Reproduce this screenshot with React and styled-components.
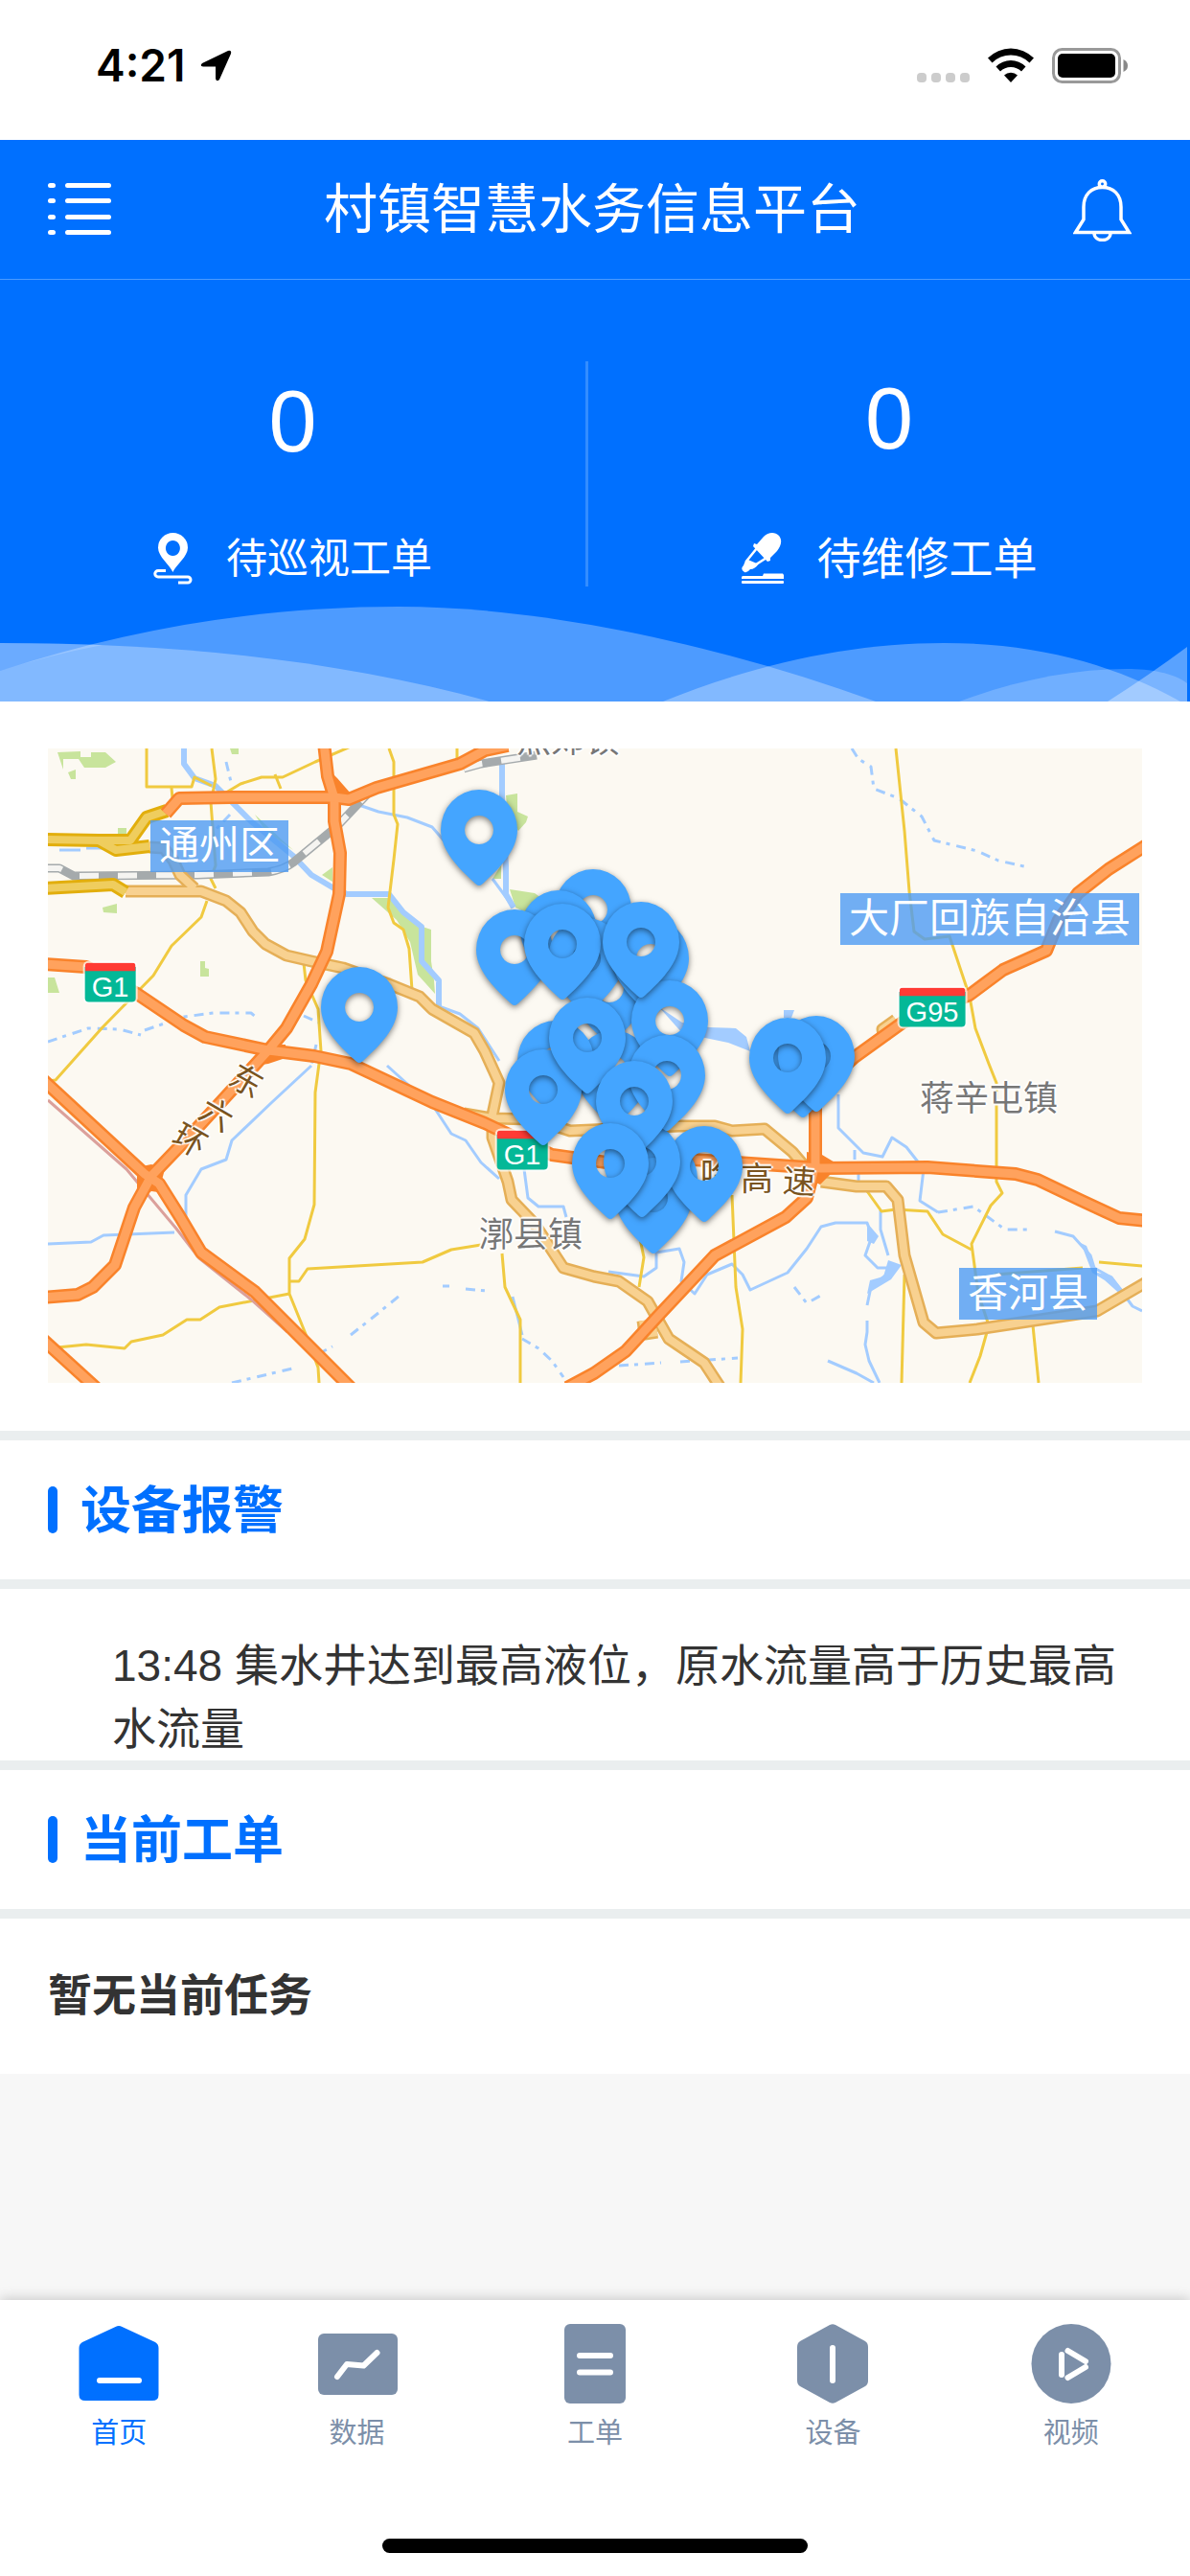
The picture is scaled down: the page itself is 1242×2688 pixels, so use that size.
import React from "react";
import styled, { createGlobalStyle } from "styled-components";

const BLUE = "#0070ff";
const SLATE = "#7c8fa9";

const GlobalStyle = createGlobalStyle`
  *, *::before, *::after { box-sizing: border-box; }
  body {
    margin: 0;
    background: #f7f7f7;
    color: #333;
    font-family: "Liberation Sans", "Noto Sans CJK SC", sans-serif;
  }
  h1, h2, p { margin: 0; }
  button {
    border: 0;
    padding: 0;
    background: none;
    color: inherit;
    font: inherit;
    cursor: pointer;
  }
  svg { display: block; flex: none; }
`;

const Page = styled.div`
  display: flex;
  flex-direction: column;
  min-height: 100vh;
`;

const StatusBar = styled.div`
  display: flex;
  align-items: center;
  justify-content: space-between;
  height: 146px;
  padding: 0 65px 10px 100px;
  background: #fff;
  color: #000;
`;

const StatusGroup = styled.div`
  display: flex;
  align-items: center;
  gap: ${(p) => p.$gap}px;
`;

const Clock = styled.span`
  font-family: Inter, "Liberation Sans", sans-serif;
  font-size: 46px;
  font-weight: 600;
  line-height: 56px;
`;

const TitleBar = styled.header`
  display: flex;
  align-items: center;
  justify-content: space-between;
  height: 146px;
  padding: 1px 61px 0 50px;
  border-bottom: 1px solid #4c9bff;
  background: ${BLUE};
  color: #fff;
`;

const Title = styled.h1`
  font-size: 56px;
  font-weight: 400;
  line-height: 80px;
`;

const Hero = styled.section`
  padding-top: 85px;
  background: ${BLUE};
  color: #fff;
`;

const Stats = styled.div`
  display: grid;
  grid-template-columns: calc(50% - 10px) 3px 1fr;
  align-items: center;
  height: 250px;
  margin-bottom: 5px;
`;

const StatDivider = styled.div`
  align-self: start;
  height: 235px;
  background: #338dff;
`;

const Stat = styled.div`
  display: flex;
  flex-direction: column;
  align-items: center;
  gap: 62px;
`;

const StatValue = styled.span`
  font-size: 90px;
  line-height: 100px;
`;

const StatLabel = styled.span`
  display: flex;
  align-items: center;
  gap: 35px;
  font-size: ${(p) => (p.$large ? 46 : 43)}px;
  line-height: ${(p) => (p.$large ? 68 : 62)}px;
`;

const Waves = styled.svg`
  width: 100%;
  height: 100px;
`;

const MapPanel = styled.section`
  padding: 49px 50px 50px;
  background: #fff;
`;

const MapCanvas = styled.div`
  position: relative;
  aspect-ratio: 1142 / 662;
  overflow: hidden;
  background: #fcf9f2;
`;

const MapDrawing = styled.svg`
  width: 100%;
  height: 100%;
`;

const OnMap = styled.div`
  position: absolute;
  left: ${(p) => ((p.$x - 50) / 1142) * 100}%;
  top: ${(p) => ((p.$y - 781) / 662) * 100}%;
  transform: translate(-50%, -50%) rotate(${(p) => p.$turn || 0}deg);
  white-space: nowrap;
`;

const District = styled(OnMap)`
  padding: 0 9px;
  background: rgba(78, 155, 243, 0.8);
  color: #fff;
  font-size: 42px;
  line-height: 54px;
`;

const Place = styled(OnMap)`
  color: ${(p) => (p.$road ? "#7a5420" : "#777")};
  font-size: ${(p) => (p.$road ? 34 : 36)}px;
  line-height: 40px;
  text-shadow: 2px 0 1px #fff, -2px 0 1px #fff, 0 2px 1px #fff, 0 -2px 1px #fff;
`;

const Shield = styled(OnMap)`
  padding: 0 7px;
  border-top: 9px solid #ff3b35;
  border-radius: 4px;
  background: #04b897;
  box-shadow: 0 0 0 2px rgba(255, 255, 255, 0.7);
  color: #fff;
  font-size: 29px;
  line-height: 32px;
`;

const Pin = styled.button`
  position: absolute;
  left: ${(p) => ((p.$x - 50) / 1142) * 100}%;
  top: ${(p) => ((p.$y - 781) / 662) * 100}%;
  transform: translate(-50%, -100%);
  filter: drop-shadow(0 2px 3px rgba(0, 0, 0, 0.5));
`;

const SectionHead = styled.div`
  display: flex;
  align-items: center;
  gap: 24px;
  height: 165px;
  padding: 0 50px;
  border-top: 10px solid #eaeeef;
  border-bottom: 10px solid #eaeeef;
  background: #fff;
`;

const Marker = styled.span`
  width: 10px;
  height: 49px;
  border-radius: 5px;
  background: ${BLUE};
`;

const SectionTitle = styled.h2`
  padding-top: 2px;
  color: ${BLUE};
  font-size: 53px;
  font-weight: 600;
  line-height: 76px;
`;

const Alarm = styled.p`
  padding: 47px 50px 0 117px;
  background: #fff;
  font-size: 46px;
  line-height: 66px;
`;

const Empty = styled.p`
  padding: 47px 50px 49px;
  background: #fff;
  font-size: 46px;
  font-weight: 600;
  line-height: 66px;
`;

const Filler = styled.div`
  flex: 1;
`;

const TabBar = styled.nav`
  display: flex;
  flex-direction: column;
  padding-bottom: 24px;
  background: #fff;
  box-shadow: 0 -2px 12px rgba(0, 0, 0, 0.18);
`;

const Tabs = styled.div`
  display: grid;
  grid-template-columns: repeat(5, 1fr);
  padding: 25px 0 90px;
`;

const Tab = styled.button`
  display: flex;
  flex-direction: column;
  align-items: center;
  gap: 10px;
  color: ${(p) => (p.$active ? BLUE : SLATE)};
  font-size: 29px;
  line-height: 40px;
`;

const HomeIndicator = styled.div`
  align-self: center;
  width: 444px;
  max-width: 60%;
  height: 15px;
  border-radius: 8px;
  background: #000;
`;

const LocationArrow = () => (
  <svg width="33" height="33" viewBox="0 0 33 33">
    <path d="M2 14 L29 1 Q33 0 32 4 L20 31 Q17 34 16 30 V17.500 H3 Q-1 17 2 14Z" fill="#000" />
  </svg>
);

const SignalDots = () => (
  <svg width="55" height="37" viewBox="0 0 55 37" fill="#ccc">
    {[0, 15, 30, 45].map((x) => (
      <rect key={x} x={x} y="26" width="10" height="10" rx="4" />
    ))}
  </svg>
);

const Wifi = () => (
  <svg width="48" height="37" viewBox="0 0 48 37" fill="#000">
    <path d="M0 10.500 A34 34 0 0 1 48 10.500 L43.500 15.500 A27.500 27.500 0 0 0 4.500 15.500Z" />
    <path d="M8.500 19.500 A22 22 0 0 1 39.500 19.500 L35 24.500 A15.500 15.500 0 0 0 13 24.500Z" />
    <path d="M17 28.500 A10 10 0 0 1 31 28.500 L24 36Z" />
  </svg>
);

const Battery = () => (
  <svg width="79" height="37" viewBox="0 0 79 37">
    <rect x="1.500" y="1.500" width="69" height="34" rx="9" fill="none" stroke="#999" strokeWidth="3" />
    <rect x="6" y="6" width="60" height="25" rx="5" fill="#000" />
    <path d="M74.500 12 Q79 14 79 18.500 Q79 23 74.500 25Z" fill="#888" />
  </svg>
);

const MenuIcon = () => (
  <svg width="66" height="56" viewBox="0 0 66 56" fill="#fff">
    {[0, 16, 33, 49].map((y) => (
      <g key={y}>
        <rect x="0" y={y} width="8" height="5" rx="2.500" />
        <rect x="18" y={y} width="48" height="5" rx="2.500" />
      </g>
    ))}
  </svg>
);

const BellIcon = () => (
  <svg width="61" height="65" viewBox="0 0 61 65" fill="none" stroke="#fff" strokeWidth="3.500">
    <circle cx="30.500" cy="5" r="3.200" />
    <path d="M2.500 55.500 L11 42 V29 C11 16 19 8.500 30.500 8.500 C42 8.500 50 16 50 29 V42 L58.500 55.500Z" />
    <path d="M22 56 C22 66 39 66 39 56" />
  </svg>
);

const PatrolIcon = () => (
  <svg width="41" height="54" viewBox="0 0 41 54">
    <path
      d="M20.400 41 C17 33 5 25 5 15.500 A15.500 15.500 0 0 1 36 15.500 C36 25 24 33 20.400 41Z M20.400 8 a7.500 8 0 1 0 .01 0Z"
      fill="#fff"
      fillRule="evenodd"
    />
    <path d="M13 39.500 H5 A3 3 0 0 0 5 46 H36 A3 3 0 0 1 36 52 H26" fill="none" stroke="#fff" strokeWidth="3" />
  </svg>
);

const RepairIcon = () => (
  <svg width="44" height="54" viewBox="0 0 44 54" fill="#fff">
    <path d="M13 11 L16 12 L23 4 C28 -1 35 -1 39 3 C43 8 41 14 37 19 L30 26 V29 L27 30 L12 14Z" />
    <path d="M16 16 L5.500 29 L15 33 L26 26" fill="none" stroke="#fff" strokeWidth="2.500" />
    <path d="M4 29 Q11 33 18 32 Q14 38 9 38 Q6 42 3 41 Q-2 38 2 34Z" />
    <path d="M0 46 L1 45 H22 L23 42.500 H43 L44 44 V48 H0Z" />
    <rect x="0" y="50" width="44" height="3" rx="1" />
  </svg>
);

const tabShapes = {
  home: (
    <>
      <path d="M38.500 3 Q42 1 45.500 3 L80 19 Q83.500 21 83.500 25 V74 Q83.500 80 77 80 H7 Q.5 80 .5 74 V25 Q.5 21 4 19Z" fill={BLUE} />
      <path d="M22 59 H63" />
    </>
  ),
  data: (
    <>
      <rect x="1" y="10" width="83" height="64" rx="6" fill={SLATE} />
      <path d="M21 55 L31 42 L48.500 43.500 L62.500 30" />
    </>
  ),
  order: (
    <>
      <rect x="10" y="0" width="64" height="83" rx="6" fill={SLATE} />
      <path d="M26 33 H58 M26 50.500 H58" />
    </>
  ),
  device: (
    <>
      <path d="M39 1 Q42 -.5 45 1 L76 18 Q79 20 79 24 V59 Q79 63 76 65 L45 82 Q42 83.500 39 82 L8 65 Q5 63 5 59 V24 Q5 20 8 18Z" fill={SLATE} />
      <path d="M42 25 V59" />
    </>
  ),
  video: (
    <>
      <circle cx="42" cy="41.500" r="41.500" fill={SLATE} />
      <path d="M32 32 V53 M38.500 28 L57 39 M57 45 L38.500 56" />
    </>
  ),
};

const TabIcon = ({ name }) => (
  <svg width="84" height="84" viewBox="0 0 84 84" fill="none">
    <g stroke="#fff" strokeWidth="6" strokeLinecap="round" strokeLinejoin="round">
      {React.Children.map(tabShapes[name].props.children, (shape) =>
        shape.props.fill ? React.cloneElement(shape, { stroke: "none" }) : shape
      )}
    </g>
  </svg>
);

const motorways = [
  "M338 775 L342 810 L349 833 V857 L355 890 L354 933 L341 993 L325 1027 L299 1073 L280 1096 L203 1180 L158 1227 L140 1260 L120 1320 L97 1343 L81 1351 L45 1354",
  "M173 849 L187 833 L240 832 H349 L364 834 L393 822 L480 797 L506 783 L530 778",
  "M45 1006 L90 1009 L143 1037 L192 1070 L214 1082 L280 1096 L328 1102 L366 1110 L451 1150 L506 1172 L576 1205 L640 1214 L723 1210 L857 1219 L968 1218 L1060 1225 L1083 1231 L1127 1252 L1168 1271 L1198 1274",
  "M45 1127 L151 1225 L166 1235 L188 1270 L210 1307 L266 1348 L321 1403 L366 1448",
  "M45 1398 L100 1448",
  "M1198 881 L1157 907 L1125 932 L1105 960 L1092 992 L1047 1012 L1012 1038 L942 1067 L892 1103 L851 1140 V1215 L842 1250 L820 1270 L746 1310 L687 1373 L653 1410 L620 1433 L592 1448",
];

const trunkRoads = [
  "M156 884 L171 885 L181 898 L188 913 L203 927",
  "M131 930 H210 L236 940 L251 952 L264 972 L277 985 L299 997 L325 1003 L358 1010 L406 1027 L438 1040 L451 1053 L495 1078 L506 1097 L521 1130 L514 1163 V1187 L530 1233 L534 1252 L558 1277 L588 1323 L620 1332 L646 1337 L676 1358 L698 1397 L735 1422 L752 1448",
  "M484 1162 L514 1167 L558 1168 L595 1180 L709 1175 H746 L764 1180 L798 1178 L827 1202 L838 1215",
  "M857 1233 L894 1238 H925 L937 1252 L944 1310 L964 1380 L977 1391 L1020 1387 L1145 1368 L1198 1337",
  "M935 1064 L921 1074 L923 1086",
  "M671 1378 L673 1392 L686 1390",
];

const expressways = [
  "M45 876 L103 877 L121 887 L156 883",
  "M103 877 H136 L153 853 L174 846",
  "M45 927 L118 923 L131 931",
];

const localRoads = [
  "M153 781 V821 H200 L203 811 L221 820 M179 822 L180 833",
  "M221 781 L225 813 L220 837 L225 903 L220 917 L225 927",
  "M236 827 L251 818 L273 811 H295 L329 795 L366 779 M287 808 L293 823",
  "M406 781 L411 795 V850 L415 860 L411 897 L405 947 L411 963 L421 970 L427 990 L430 1033",
  "M477 781 V797",
  "M216 940 L210 957 L179 987 L160 1018 L107 1072 L58 1127 L50 1128",
  "M317 1005 L319 1023 L332 1053 L335 1097 L333 1110 L329 1140 L328 1257 L318 1293 L302 1313 V1350 L321 1397 L332 1427 L333 1443",
  "M302 1337 H312 L321 1324 L441 1317 L471 1304 L502 1299",
  "M302 1350 L229 1364 L209 1377 H195 L170 1393 L137 1400 L130 1407 L90 1403 L50 1407",
  "M524 1308 L527 1343 L543 1377 V1443",
  "M935 781 L944 867 L949 930 L954 972 L965 980 L991 977 L1012 1040 L1018 1073 L1032 1110 L1040 1130 V1233 L1046 1245 L1034 1258 L1014 1298 L1021 1350 L1032 1383 L1023 1415 L1012 1443",
  "M905 1243 L920 1264 L935 1262 L968 1264 L984 1288 L1014 1304",
  "M764 1247 L768 1343 L775 1387 L773 1443",
  "M944 1330 L941 1443",
  "M1078 1383 L1084 1443",
  "M1147 1317 L1192 1321 M1038 1330 L1130 1323",
  "M668 1293 L672 1312 L667 1343",
];

const rivers = [
  "M192 781 V797 L203 812 L225 820 L242 837 L262 857 L306 893 L325 913 L347 926 L362 933 H406 L421 952 L440 967 V1003 L458 1023 V1050",
  "M524 797 V840 L528 903 V933 L536 947",
];

const streams = [
  "M458 1050 L480 1058 L499 1073 L521 1107",
  "M366 837 L395 847 L425 853 L451 863 L470 885 M514 917 L536 947",
  "M62 887 H84 M90 885 H108",
  "M325 1112 L284 1150 L242 1190 L236 1210 L210 1220 L194 1247 V1277",
  "M50 1298 L95 1296 L108 1289 L182 1286",
  "M404 1112 L454 1157 L471 1183 L486 1190 L502 1213 L521 1230",
  "M547 1220 L551 1250 L562 1259 H588 L591 1270",
  "M875 1142 V1177 L901 1203 L921 1207 L931 1187 L946 1197 L964 1220 L960 1253 L979 1265",
  "M1101 1285 L1120 1290 L1138 1310 L1142 1323 L1160 1333 L1182 1363 L1192 1368",
  "M635 1327 L672 1332 L685 1323 V1307 L709 1303 L714 1317 L711 1337 L725 1350 L738 1330 L764 1319 L775 1330 L783 1346 L822 1328 L842 1303 L857 1280 L872 1276 H905 L910 1290 L903 1310 L916 1323 H934 L909 1343 L905 1362",
  "M919 1263 V1283 L927 1310 M896 1217 V1232 M892 1200 V1210",
  "M905 1378 V1390 L903 1403 L907 1420 L918 1443 M864 1420 L894 1433 L912 1443",
  "M535 1353 L545 1393",
];

const brooks = [
  "M236 795 L242 820 M240 850 L218 873",
  "M50 1087 L92 1073 L125 1074 L147 1080 M151 1075 L192 1061 L223 1057 H262 L268 1062",
  "M317 1060 L332 1067 M330 1090 L325 1112",
  "M366 1393 L395 1370 L417 1352 M462 1342 H469 M486 1345 L508 1347",
  "M545 1397 L562 1407 L576 1420 L588 1437 M242 1443 L305 1428 M332 1413 L347 1405",
  "M889 781 L896 792 L909 800 L912 823 L938 833 L962 852 L975 877 L1020 888 L1042 898 L1073 905",
  "M979 1265 L1016 1259 L1049 1283 L1075 1283",
  "M829 1343 L842 1360 L860 1350 M646 1425 L690 1422 M710 1421 L770 1417",
];

const parks = [
  "M60 785 L84 784 V790 H95 V785 H110 L121 795 L110 801 H88 L82 792 H66 V803Z",
  "M71 806 L79 803 V813 H74Z M240 781 H249 V787 H242Z M209 1003 H214 V1010 L218 1011 V1019 H209Z",
  "M50 1020 H57 L62 1036 H50Z M107 947 L122 943 V953 L108 952Z M123 864 H132 V873 H123Z",
  "M388 937 H406 L425 953 L441 967 L450 970 V1003 L453 1023 L454 1037 L436 1017 L428 983 L414 960Z",
  "M336 913 L347 905 V920Z M266 850 L295 877 L306 887 L277 867Z",
  "M528 830 L540 828 V847 L551 852 L549 858 L541 867 L530 850Z",
  "M532 928 L558 932 L565 937 L551 953 L538 947Z M514 917 L523 903 V917Z",
];

const Lines = ({ paths, color, width, dash }) => (
  <g fill="none" stroke={color} strokeWidth={width} strokeDasharray={dash} strokeLinejoin="round">
    {paths.map((d) => (
      <path key={d} d={d} />
    ))}
  </g>
);

const railway = [
  "M45 906 H62 L77 914 L206 913 L280 910 Q297 907 306 900 L352 862 L384 828",
  "M484 802 L502 797 L560 788",
];
const highSpeedRail = ["M50 1148 L132 1220 L147 1238 L184 1282 L208 1313 L262 1356 L300 1390"];

const districts = [
  { name: "通州区", x: 229, y: 883 },
  { name: "大厂回族自治县", x: 1033, y: 959 },
  { name: "香河县", x: 1073, y: 1350 },
];

const places = [
  { name: "燕郊镇", x: 593, y: 773 },
  { name: "蒋辛屯镇", x: 1032, y: 1147 },
  { name: "漷县镇", x: 554, y: 1289 },
  { name: "东", x: 257, y: 1128, road: true, turn: 30 },
  { name: "六", x: 226, y: 1163, road: true, turn: 30 },
  { name: "环", x: 198, y: 1190, road: true, turn: 30 },
  { name: "哈", x: 748, y: 1225, road: true },
  { name: "高", x: 790, y: 1230, road: true },
  { name: "速", x: 834, y: 1233, road: true, turn: 4 },
];

const shields = [
  { name: "G1", x: 115, y: 1025 },
  { name: "G1", x: 545, y: 1200 },
  { name: "G95", x: 973, y: 1051 },
];

const pins = [
  [500, 924], [375, 1109], [619, 1007], [583, 1029], [537, 1049], [636, 1089],
  [612, 1058], [587, 1043], [679, 1058], [640, 1175], [699, 1123], [669, 1041],
  [580, 1165], [567, 1195], [613, 1141], [688, 1288], [682, 1308], [735, 1275],
  [670, 1270], [696, 1180], [662, 1207], [637, 1272], [838, 1166], [852, 1160],
  [822, 1162],
];

const stats = [
  { label: "待巡视工单", value: 0, Icon: PatrolIcon },
  { label: "待维修工单", value: 0, Icon: RepairIcon, large: true },
];

const tabs = [
  { label: "首页", icon: "home", active: true },
  { label: "数据", icon: "data" },
  { label: "工单", icon: "order" },
  { label: "设备", icon: "device" },
  { label: "视频", icon: "video" },
];

const StatBlock = ({ stat }) => (
  <Stat>
    <StatValue>{stat.value}</StatValue>
    <StatLabel $large={stat.large}>
      <stat.Icon />
      {stat.label}
    </StatLabel>
  </Stat>
);

const DeviceMap = () => (
  <MapCanvas>
    <MapDrawing viewBox="50 781 1142 662" preserveAspectRatio="none">
      <g fill="#c8e49c">
        {parks.map((d) => (
          <path key={d} d={d} />
        ))}
      </g>
      <Lines paths={rivers} color="#a3ccff" width={6} />
      <Lines paths={streams} color="#a3ccff" width={3} />
      <Lines paths={brooks} color="#a3ccff" width={3} dash="10 6 4 7" />
      <path
        d="M688 1051 L712 1067 L740 1072 L768 1073 L779 1082 L783 1097 L760 1088 L712 1078Z M818 1054 H829 L826 1062 H818Z M905 1276 L917 1290 L912 1298 L905 1295Z M927 1315 L941 1320 L930 1335 L905 1350 L908 1336 L922 1332Z M1128 1297 L1134 1300 L1145 1328 L1160 1331 L1177 1352 L1172 1353 L1153 1336 L1140 1328Z"
        fill="#a3ccff"
      />
      <Lines paths={localRoads} color="#f0ca40" width={3} />
      <Lines paths={highSpeedRail} color="#dba09b" width={3} />
      <Lines paths={railway} color="#a5aaac" width={9} />
      <Lines paths={railway} color="#f5f4f1" width={6} dash="20 20" />
      <Lines paths={trunkRoads} color="#e5af57" width={13} />
      <Lines paths={trunkRoads} color="#f8d190" width={8} />
      <Lines paths={expressways} color="#e2ae0c" width={14} />
      <Lines paths={expressways} color="#efcd5e" width={8} />
      <Lines paths={motorways} color="#f9832b" width={14} />
      <path d="M143 1218 L158 1215 L172 1220 L168 1235 L172 1245 L158 1243 L148 1250 L143 1240Z M268 1090 H298 V1104 L280 1110 L266 1112Z M340 800 L352 812 L366 828 L356 840 L342 836Z M842 1202 L858 1205 L873 1214 L868 1224 L856 1236 L842 1230Z" fill="#f9832b" />
      <Lines paths={motorways} color="#ffa25d" width={9} />
    </MapDrawing>
    {places.map((p) => (
      <Place key={p.name} $x={p.x} $y={p.y} $road={p.road} $turn={p.turn}>{p.name}</Place>
    ))}
    {districts.map((d) => (
      <District key={d.name} $x={d.x} $y={d.y}>{d.name}</District>
    ))}
    {shields.map((s) => (
      <Shield key={s.x} $x={s.x} $y={s.y}>{s.name}</Shield>
    ))}
    {pins.map(([x, y]) => (
      <Pin key={`${x}-${y}`} $x={x} $y={y} type="button" aria-label="设备">
        <svg width="80" height="100" viewBox="0 0 80 100">
          <path
            d="M40 100 C38 100 36 98 34 96 C20 83 0 64 0 42 A40 42 0 0 1 80 42 C80 64 60 83 46 96 C44 98 42 100 40 100Z M40 27 a15 15 0 1 0 .01 0Z"
            fill="#44a5ff"
            fillRule="evenodd"
          />
        </svg>
      </Pin>
    ))}
  </MapCanvas>
);

export default function App() {
  return (
    <Page lang="zh-CN">
      <GlobalStyle />
      <StatusBar>
        <StatusGroup $gap={16}>
          <Clock>4:21</Clock>
          <LocationArrow />
        </StatusGroup>
        <StatusGroup $gap={19}>
          <SignalDots />
          <Wifi />
          <Battery />
        </StatusGroup>
      </StatusBar>

      <TitleBar>
        <button type="button" aria-label="菜单"><MenuIcon /></button>
        <Title>村镇智慧水务信息平台</Title>
        <button type="button" aria-label="通知"><BellIcon /></button>
      </TitleBar>

      <Hero>
        <Stats>
          <StatBlock stat={stats[0]} />
          <StatDivider />
          <StatBlock stat={stats[1]} />
        </Stats>
        <Waves viewBox="0 0 1242 100" preserveAspectRatio="none" fill="#fff">
          <path d="M0 68 C140 22 280 1 416 1 C560 1 740 37 914 100 H0Z" fillOpacity=".3" />
          <path d="M0 39 C180 39 350 56 511 100 H0Z" fillOpacity=".3" />
          <path d="M0 39 Q50 39 107 41 Q50 52 0 68Z" fillOpacity=".17" />
          <path d="M692 100 C790 60 890 39 985 39 C1080 39 1160 60 1232 100Z" fillOpacity=".3" />
          <path d="M1001 100 C1060 78 1120 66 1176 66 C1200 66 1225 70 1239 81 V100Z" fillOpacity=".2" />
          <path d="M1156 100 Q1200 72 1239 43 V100Z" fillOpacity=".35" />
        </Waves>
      </Hero>

      <MapPanel>
        <DeviceMap />
      </MapPanel>

      <SectionHead>
        <Marker />
        <SectionTitle>设备报警</SectionTitle>
      </SectionHead>
      <Alarm>13:48 集水井达到最高液位，原水流量高于历史最高水流量</Alarm>

      <SectionHead>
        <Marker />
        <SectionTitle>当前工单</SectionTitle>
      </SectionHead>
      <Empty>暂无当前任务</Empty>

      <Filler />

      <TabBar>
        <Tabs>
          {tabs.map((t) => (
            <Tab key={t.label} type="button" $active={t.active} aria-current={t.active ? "page" : undefined}>
              <TabIcon name={t.icon} />
              {t.label}
            </Tab>
          ))}
        </Tabs>
        <HomeIndicator />
      </TabBar>
    </Page>
  );
}
